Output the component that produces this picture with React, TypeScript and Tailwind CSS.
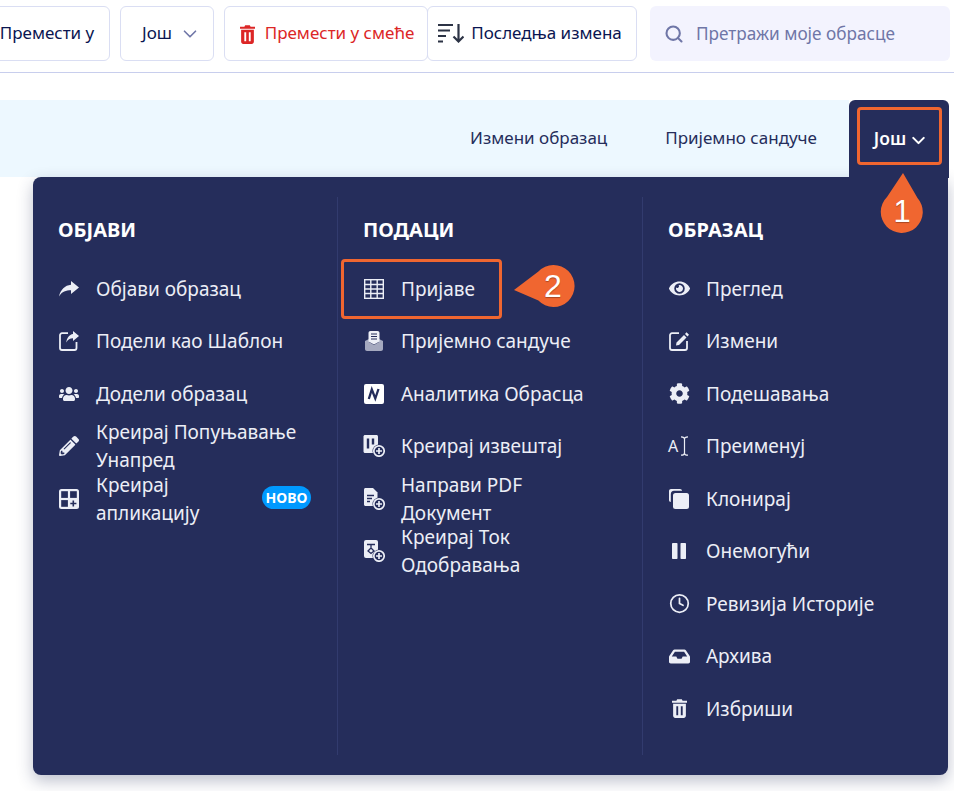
import React from "react";
import { ChevronDown, Search, Clock } from "lucide-react";
import { FaUsers, FaPencilAlt, FaEye, FaCog, FaInbox } from "react-icons/fa";

const Trash = ({ className }: { className?: string }) => (
  <svg viewBox="0 0 16 20" className={className} fill="currentColor">
    <path d="M5.5 0h5l.8 1.6H16v2.2H0V1.6h4.7z" />
    <path fillRule="evenodd" d="M1.2 5h13.6v12.6c0 1.3-1 2.4-2.3 2.4h-9c-1.3 0-2.3-1.1-2.3-2.4zM4.6 7.6v9.6h2V7.6zm4.8 0v9.6h2V7.6z" />
  </svg>
);
const SortIcon = () => (
  <svg viewBox="0 0 26 20" className="w-[26px] h-[20px] text-[#2c3345]" fill="none" stroke="currentColor" strokeWidth="2.2">
    <path d="M0 2h15M0 7.500h12M0 13h8M0 18.500h5" />
    <path d="M20.500 1v17M15.500 13.500l5 5 5-5" />
  </svg>
);
const ShareIcon = () => (
  <svg viewBox="0 0 20 16" className="w-[20px] h-[16px]" fill="currentColor">
    <path d="M12 0 20 6.500 12 13V9.300C7 9.300 3 10.500 0 15.500 1.500 8.500 6 4.300 12 3.700Z" />
  </svg>
);
const ShareSquareIcon = () => (
  <svg viewBox="0 0 20 20" className="w-[20px] h-[20px]">
    <path d="M9 2.200H3A2 2 0 0 0 1 4.200V17a2 2 0 0 0 2 2h12.500a2 2 0 0 0 2-2v-6" fill="none" stroke="currentColor" strokeWidth="1.800" />
    <path d="M14 0 20 5 14 10V7.300C11 7.300 8.800 8.500 7.300 11.500 7.800 7 10.300 3.600 14 3.100Z" fill="currentColor" />
  </svg>
);
const EditIcon = () => (
  <svg viewBox="0 0 20 20" className="w-[20px] h-[20px]">
    <path d="M10 2.200H3A2 2 0 0 0 1 4.200V17a2 2 0 0 0 2 2h13a2 2 0 0 0 2-2V10" fill="none" stroke="currentColor" strokeWidth="1.800" />
    <path d="M7.500 11.500 15 4 17.500 6.500 10 14 7 14.500ZM16 3 17.500 1.200 20 3.700 18.500 5.500Z" fill="currentColor" />
  </svg>
);
const RenameIcon = () => (
  <span className="flex items-center w-[22px] h-[20px]">
    <span className="text-[16px] leading-[20px] w-[12px] shrink-0 pb-[1px]">A</span>
    <svg viewBox="0 0 9 20" className="w-[9px] h-[20px] shrink-0" fill="none" stroke="currentColor" strokeWidth="1.200">
      <path d="M1 .8c2.500 0 3.500.8 3.500 2.300v13.800c0 1.500-1 2.300-3.500 2.300M8 .8c-2.500 0-3.500.8-3.500 2.300M8 19.200c-2.500 0-3.500-.8-3.500-2.300" />
    </svg>
  </span>
);
const PauseIcon = () => (
  <svg viewBox="0 0 14 16" className="w-[14px] h-[16px]" fill="currentColor">
    <rect width="5.500" height="16" rx="0.800" />
    <rect x="8.500" width="5.500" height="16" rx="0.800" />
  </svg>
);
const AppIcon = () => (
  <svg viewBox="0 0 20 20" className="w-[20px] h-[20px]">
    <rect width="20" height="20" rx="2.500" fill="currentColor" />
    <g fill="#252d5b">
      <rect x="2.200" y="2.200" width="6.700" height="6.700" />
      <rect x="11.100" y="2.200" width="6.700" height="6.700" />
      <rect x="2.200" y="11.100" width="6.700" height="6.700" />
      <path d="M13.500 11.500h1.600v2.200h2.300v1.600h-2.300v2.300h-1.600v-2.300h-2.200v-1.600h2.200z" />
    </g>
  </svg>
);
const TableIcon = () => (
  <svg viewBox="0 0 20 20" className="w-[20px] h-[20px]" fill="none" stroke="currentColor" strokeWidth="1.400">
    <rect x="0.700" y="0.700" width="18.600" height="18.600" />
    <path d="M0.700 5.500h18.600M0.700 10h18.600M0.700 14.500h18.600M6.800 0.700v18.600M13.200 0.700v18.600" />
  </svg>
);
const InboxIcon = () => (
  <svg viewBox="0 0 18 20" className="w-[18px] h-[20px]">
    <path d="M0 10 4 8v3l5 3 5-3V8l4 2v8c0 1.200-.8 2-2 2H2c-1.200 0-2-.8-2-2z" fill="#a5a9bf" />
    <path d="M3.500 2c0-1.200.8-2 2-2h7c1.200 0 2 .8 2 2v8.500L9 13.500l-5.500-3z" fill="#eef0f7" />
    <path d="M6 3h6M6 5.500h6M6 8h6" stroke="#252d5b" strokeWidth="1.100" />
  </svg>
);
const AnalyticsIcon = () => (
  <svg viewBox="0 0 20 20" className="w-[20px] h-[20px]">
    <rect width="20" height="20" rx="2" fill="#fff" />
    <path d="M4.800 15 7.800 5.500 11.300 14.500 14.500 5" fill="none" stroke="#252d5b" strokeWidth="2.300" />
  </svg>
);
const Plus = () => (
  <g>
    <circle cx="16" cy="16" r="6.500" fill="#252d5b" />
    <circle cx="16" cy="16" r="5.200" fill="none" stroke="currentColor" strokeWidth="1.700" />
    <path d="M16 13v6M13 16h6" stroke="currentColor" strokeWidth="1.700" />
  </g>
);
const ReportIcon = () => (
  <svg viewBox="0 0 22 22" className="w-[22px] h-[22px]">
    <path d="M2 0h11.500c.8 0 1.500.7 1.500 1.500V18H2c-.8 0-1.500-.7-1.500-1.500v-15C.5.700 1.200 0 2 0z" fill="currentColor" />
    <path d="M5 3.500v10M10 3.500v6" stroke="#252d5b" strokeWidth="2.400" />
    <Plus />
  </svg>
);
const PdfIcon = () => (
  <svg viewBox="0 0 22 22" className="w-[22px] h-[22px]">
    <path d="M2.500 0h7.500l4.500 4.500V18H2.500c-.8 0-1.500-.7-1.500-1.500v-15C1 .700 1.700 0 2.500 0z" fill="currentColor" />
    <path d="M4 7.500h7M4 10.500h5M4 13.500h3" stroke="#252d5b" strokeWidth="1.300" />
    <Plus />
  </svg>
);
const FlowIcon = () => (
  <svg viewBox="0 0 22 22" className="w-[22px] h-[22px]">
    <rect x="1" y="0" width="14" height="18" rx="2" fill="currentColor" />
    <path d="M4 4.500h8M8 4.500v4M5 11l3-3 3 3-3 2.500z" fill="none" stroke="#252d5b" strokeWidth="1.300" />
    <Plus />
  </svg>
);
const CloneIcon = () => (
  <svg viewBox="0 0 20 20" className="w-[20px] h-[20px]" fill="currentColor">
    <path d="M2 0h9c1 0 2 .8 2 1.800H5C3 1.800 1.800 3.300 1.800 5.300V13C.8 13 0 12 0 11V2C0 .9.900 0 2 0z" />
    <rect x="4" y="4" width="16" height="16" rx="2.500" />
  </svg>
);

type Item = { icon: React.ReactNode; label: string; badge?: boolean };
const col1: Item[] = [
  { icon: <ShareIcon />, label: "Објави образац" },
  { icon: <ShareSquareIcon />, label: "Подели као Шаблон" },
  { icon: <FaUsers className="w-[20px] h-[16px]" />, label: "Додели образац" },
  { icon: <FaPencilAlt className="w-[20px] h-[20px]" />, label: "Креирај Попуњавање Унапред" },
  { icon: <AppIcon />, label: "Креирај апликацију", badge: true },
];
const col2: Item[] = [
  { icon: <TableIcon />, label: "Пријаве" },
  { icon: <InboxIcon />, label: "Пријемно сандуче" },
  { icon: <AnalyticsIcon />, label: "Аналитика Обрасца" },
  { icon: <ReportIcon />, label: "Креирај извештај" },
  { icon: <PdfIcon />, label: "Направи PDF Документ" },
  { icon: <FlowIcon />, label: "Креирај Ток Одобравања" },
];
const col3: Item[] = [
  { icon: <FaEye className="w-[21px] h-[21px]" />, label: "Преглед" },
  { icon: <EditIcon />, label: "Измени" },
  { icon: <FaCog className="w-[21px] h-[21px]" />, label: "Подешавања" },
  { icon: <RenameIcon />, label: "Преименуј" },
  { icon: <CloneIcon />, label: "Клонирај" },
  { icon: <PauseIcon />, label: "Онемогући" },
  { icon: <Clock className="w-[21px] h-[21px]" strokeWidth={2} />, label: "Ревизија Историје" },
  { icon: <FaInbox className="w-[21px] h-[21px]" />, label: "Архива" },
  { icon: <Trash className="w-[15px] h-[21px]" />, label: "Избриши" },
];

function Column({ title, items, width, last }: { title: string; items: Item[]; width: string; last?: boolean }) {
  return (
    <div className={`${width} pl-[25px] pr-[26px] ${last ? "" : "border-r border-[#323b6e]"}`}>
      <div className="h-[65.500px] flex items-center text-[20px] font-bold text-white">{title}</div>
      {items.map((it) => (
        <div key={it.label} className="h-[52.500px] flex items-center text-[#eceef6]">
          <div className="w-[38px] shrink-0 flex items-center">
            <span className="w-[22px] flex justify-center">{it.icon}</span>
          </div>
          <div className="flex-1 min-w-0 flex items-center">
            <span className={`text-[19px] leading-[28px] ${it.badge ? "w-[150px]" : "max-w-[202px]"}`}>{it.label}</span>
            {it.badge && (
              <span className="ml-auto h-[23px] w-[49px] -mt-[2px] rounded-full bg-[#0099ff] text-white text-[14px] font-bold flex items-center justify-center">
                НОВО
              </span>
            )}
          </div>
        </div>
      ))}
    </div>
  );
}

export default function App() {
  return (
    <div className="relative w-[954px] h-[791px] overflow-hidden bg-white font-['Noto_Sans',sans-serif] text-[#0a1551]">
      <div className="h-[73px] border-b border-[#c8ceed] pt-[6px] flex pr-[4px] text-[17px] leading-[24px]">
        <button className="-ml-[16px] w-[126px] h-[55px] pb-[2px] border border-[#dadef3] rounded-[6px] flex items-center justify-center">
          Премести у
        </button>
        <button className="ml-[10px] w-[94px] h-[55px] pb-[2px] pl-[9px] border border-[#dadef3] rounded-[6px] flex items-center justify-center gap-[7px]">
          Још
          <ChevronDown className="w-[22px] h-[22px] mt-[2px] text-[#6f76a7]" strokeWidth={1.800} />
        </button>
        <button className="ml-[10px] w-[204px] h-[55px] pb-[2px] pl-[2px] border border-[#dadef3] rounded-[6px] flex items-center justify-center gap-[10px] text-[#dc2626]">
          <Trash className="w-[15px] h-[19px] mt-[3px]" />
          Премести у смеће
        </button>
        <button className="-ml-[1px] w-[210px] h-[55px] pb-[2px] pr-[4px] border border-[#dadef3] rounded-[6px] flex items-center justify-center gap-[7px]">
          <SortIcon />
          Последња измена
        </button>
        <div className="ml-[13px] w-[300px] h-[55px] rounded-[6px] bg-[#f3f3fe] flex items-center pl-[14px] gap-[12px] text-[#6f76a7] text-[17.200px]">
          <Search className="w-[20px] h-[20px]" strokeWidth={2.500} />
          Претражи моје обрасце
        </div>
      </div>

      <div className="mt-[27px] h-[77px] w-[849px] bg-[#edf8ff] flex items-center justify-end text-[17px] gap-[58px] pr-[32px] pb-[2px] text-[#252d5b]">
        <span>Измени образац</span>
        <span>Пријемно сандуче</span>
      </div>

      <div className="absolute left-[849px] top-[100px] w-[100px] h-[78px] bg-[#252d5b] rounded-t-[6px] flex items-center justify-center gap-[2px] text-white text-[17.500px] font-semibold pb-[1px] pl-[5px]">
        Још
        <ChevronDown className="w-[21px] h-[21px] mt-[3px]" strokeWidth={2.400} />
      </div>

      <div className="ml-[33px] w-[915px] h-[598px] bg-[#252d5b] rounded-b-[8px] rounded-tl-[8px] shadow-[0_6px_16px_rgba(37,45,91,0.3)] py-[20px] flex">
        <Column title="ОБЈАВИ" items={col1} width="w-[305px]" />
        <Column title="ПОДАЦИ" items={col2} width="w-[305px]" />
        <Column title="ОБРАЗАЦ" items={col3} width="flex-1" last />
      </div>

      <div className="absolute left-[857px] top-[107px] w-[85px] h-[58px] border-[3.500px] border-[#f06630] rounded-[4px]" />
      <div className="absolute left-[341px] top-[259px] w-[161px] h-[60px] border-[3.500px] border-[#f06630] rounded-[4px]" />

      <svg className="absolute left-[875px] top-[170px]" width="54" height="66" viewBox="0 0 54 66">
        <path d="M28 3 L 42.500 28 A 21 21 0 1 1 12 27 Z" fill="#f06630" />
      </svg>
      <span className="absolute left-[875px] top-[192px] w-[54px] text-center text-white text-[31px] leading-[40px] font-['Liberation_Sans',sans-serif] [text-shadow:0_1px_1px_rgba(0,0,0,0.3)]">1</span>

      <svg className="absolute left-[510px] top-[260px]" width="66" height="54" viewBox="0 0 66 54">
        <path d="M4 30 L 28.400 11.500 A 21 21 0 1 1 28.400 40.500 Z" fill="#f06630" />
      </svg>
      <span className="absolute left-[535px] top-[266px] w-[36px] text-center text-white text-[32px] leading-[40px] font-['Liberation_Sans',sans-serif] [text-shadow:0_1px_1px_rgba(0,0,0,0.3)]">2</span>
    </div>
  );
}
